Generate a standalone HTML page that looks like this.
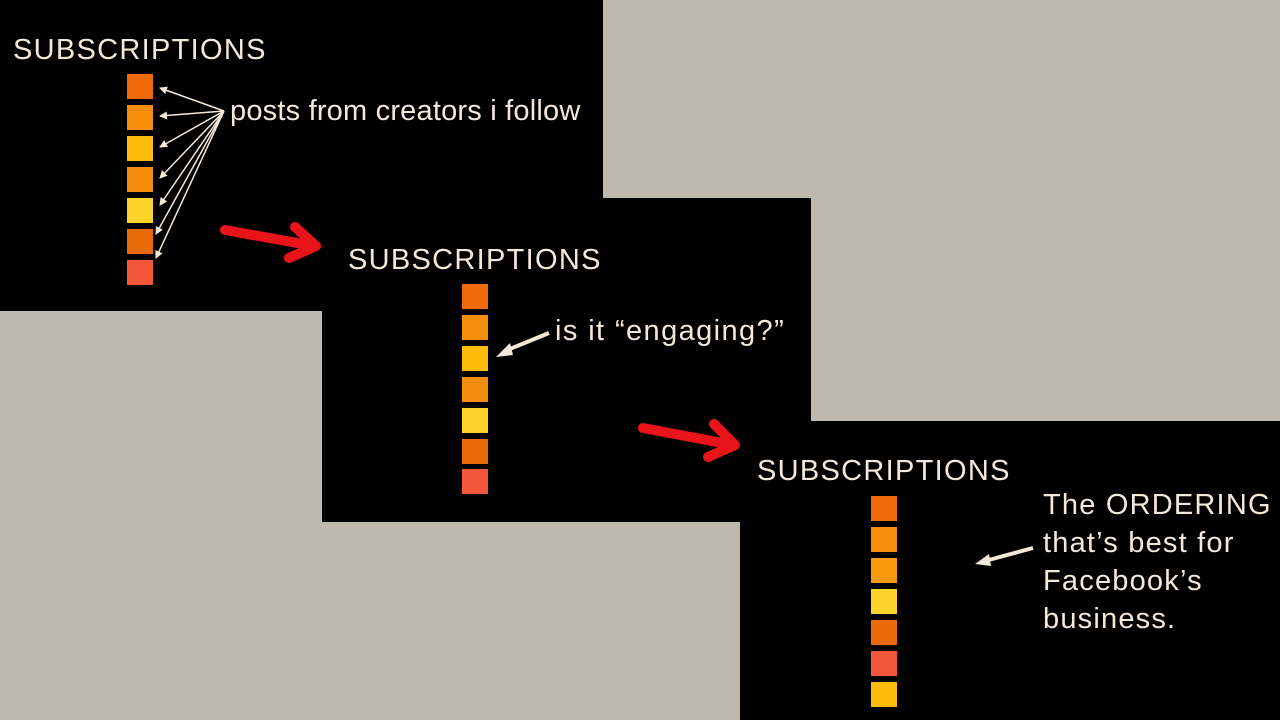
<!DOCTYPE html>
<html><head><meta charset="utf-8"><style>
body{margin:0;width:1280px;height:720px;background:#bfb8ac;position:relative;overflow:hidden;font-family:"Liberation Sans",sans-serif;}
.p{position:absolute;background:#000;}
.t{position:absolute;color:#f3e9da;font-size:29px;white-space:nowrap;letter-spacing:1.3px;}
.s{position:absolute;width:26px;height:25px;}
svg{position:absolute;left:0;top:0;}
</style></head><body>
<div class="p" style="left:0;top:0;width:603px;height:311px"></div>
<div class="p" style="left:322px;top:198px;width:489px;height:324px"></div>
<div class="p" style="left:740px;top:421px;width:540px;height:299px"></div>

<div class="t" style="left:13px;top:34px">SUBSCRIPTIONS</div>
<div class="t" style="left:230px;top:95px;letter-spacing:0.2px">posts from creators i follow</div>
<div class="t" style="left:348px;top:244px">SUBSCRIPTIONS</div>
<div class="t" style="left:555px;top:315px;letter-spacing:1.4px">is it “engaging?”</div>
<div class="t" style="left:757px;top:455px">SUBSCRIPTIONS</div>
<div class="t" style="left:1043px;top:486px;line-height:38px;letter-spacing:1.2px">The ORDERING<br>that’s best for<br>Facebook’s<br>business.</div>

<div class="s" style="left:127px;top:74px;background:#ee6a0a"></div>
<div class="s" style="left:127px;top:105px;background:#f78e0b"></div>
<div class="s" style="left:127px;top:136px;background:#fdbb0c"></div>
<div class="s" style="left:127px;top:167px;background:#f68c0c"></div>
<div class="s" style="left:127px;top:198px;background:#fdd22a"></div>
<div class="s" style="left:127px;top:229px;background:#ea6a0a"></div>
<div class="s" style="left:127px;top:260px;background:#f2573a"></div>

<div class="s" style="left:462px;top:284px;background:#ee6a0a"></div>
<div class="s" style="left:462px;top:315px;background:#f78e0b"></div>
<div class="s" style="left:462px;top:346px;background:#fdbb0c"></div>
<div class="s" style="left:462px;top:377px;background:#f68c0c"></div>
<div class="s" style="left:462px;top:408px;background:#fdd22a"></div>
<div class="s" style="left:462px;top:439px;background:#ea6a0a"></div>
<div class="s" style="left:462px;top:469px;background:#f2573a"></div>

<div class="s" style="left:871px;top:496px;background:#ee6a0a"></div>
<div class="s" style="left:871px;top:527px;background:#f78e0b"></div>
<div class="s" style="left:871px;top:558px;background:#f89a0c"></div>
<div class="s" style="left:871px;top:589px;background:#fdd22a"></div>
<div class="s" style="left:871px;top:620px;background:#ea6a0a"></div>
<div class="s" style="left:871px;top:651px;background:#f2573a"></div>
<div class="s" style="left:871px;top:682px;background:#fdbb0c"></div>

<svg width="1280" height="720">
<defs><marker id="a" markerWidth="8" markerHeight="8" refX="7" refY="4" orient="auto" markerUnits="userSpaceOnUse"><path d="M0,0 L8,4 L0,8 z" fill="#f3e9da"/></marker></defs>
<g stroke="#f3e9da" stroke-width="1.5" marker-end="url(#a)">
<line x1="224" y1="111" x2="160" y2="88"/>
<line x1="224" y1="111" x2="160" y2="116"/>
<line x1="224" y1="111" x2="160" y2="147"/>
<line x1="224" y1="111" x2="160" y2="178"/>
<line x1="224" y1="111" x2="160" y2="205"/>
<line x1="224" y1="111" x2="156" y2="234"/>
<line x1="224" y1="111" x2="156" y2="258"/>
</g>
<path d="M549,333 L505,351" stroke="#f3e9da" stroke-width="4"/>
<path d="M496,357 L510,343 L513,355 z" fill="#f3e9da"/>
<path d="M1033,548 L985,561" stroke="#f3e9da" stroke-width="4"/>
<path d="M975,564 L989,554 L991,566 z" fill="#f3e9da"/>
<g stroke="#e8141a" stroke-width="10" stroke-linecap="round" fill="none" stroke-linejoin="round">
<path d="M225,230 L314,246"/><path d="M295,227 L316,246 L289,258"/>
<path d="M643,428 L733,445"/><path d="M714,424 L735,445 L708,457"/>
</g>
</svg>
</body></html>
